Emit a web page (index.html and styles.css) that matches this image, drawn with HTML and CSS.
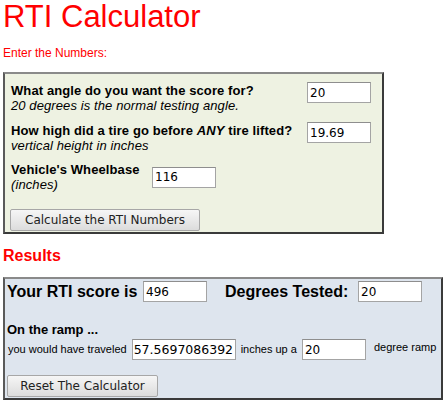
FILE: index.html
```html
<!DOCTYPE html>
<html lang="en">
<head>
    <meta charset="UTF-8">
    <meta name="viewport" content="width=device-width, initial-scale=1.0">
    <title>RTI Calculator</title>
    <link rel="stylesheet" href="styles.css">
</head>
<body>
    <h1>RTI Calculator</h1>
    <p class="intro">Enter the Numbers:</p>

    <!-- Inputs -->
    <form class="panel panel-input" onsubmit="return false;">
        <div class="row">
            <div class="label wide">
                <b>What angle do you want the score for?</b><br>
                <i>20 degrees is the normal testing angle.</i>
            </div>
            <input type="text" id="angle" value="20">
        </div>
        <div class="row">
            <div class="label wide">
                <b>How high did a tire go before <i>ANY</i> tire lifted?</b><br>
                <i>vertical height in inches</i>
            </div>
            <input type="text" id="height" value="19.69">
        </div>
        <div class="row row-center">
            <div class="label short">
                <b>Vehicle's Wheelbase</b><br>
                <i>(inches)</i>
            </div>
            <input type="text" id="wheelbase" value="116">
        </div>
        <button type="button" class="calc-button" onclick="calculate()">Calculate the RTI Numbers</button>
    </form>

    <h2>Results</h2>

    <!-- Results -->
    <div class="panel panel-results">
        <div class="score-row">
            <span class="score-label">Your RTI score is</span>
            <input type="text" id="score" value="496">
            <span class="score-label degrees-label">Degrees Tested:</span>
            <input type="text" id="degrees" value="20">
        </div>
        <div class="ramp-title">On the ramp ...</div>
        <div class="ramp-row">
            <span class="small">you would have traveled</span>
            <input type="text" id="distance" class="long" value="57.5697086392">
            <span class="small">inches up a</span>
            <input type="text" id="ramp" value="20">
            <span class="small top">degree ramp</span>
        </div>
        <button type="button" class="reset-button" onclick="resetForm()">Reset The Calculator</button>
    </div>

    <script>
        function calculate() {
            const angle = parseFloat(document.getElementById('angle').value);
            const height = parseFloat(document.getElementById('height').value);
            const wheelbase = parseFloat(document.getElementById('wheelbase').value);
            if (!angle || !height || !wheelbase) {
                alert('Please fill in all the numbers.');
                return;
            }
            const distance = height / Math.sin(angle * Math.PI / 180);
            document.getElementById('score').value = Math.round(distance / wheelbase * 1000);
            document.getElementById('degrees').value = angle;
            document.getElementById('distance').value = distance.toFixed(10);
            document.getElementById('ramp').value = angle;
        }

        function resetForm() {
            ['angle', 'height', 'wheelbase', 'score', 'degrees', 'distance', 'ramp'].forEach(id => {
                document.getElementById(id).value = '';
            });
        }
    </script>
</body>
</html>
```

FILE: styles.css
```css
body {
    font-family: "Liberation Sans", Arial, sans-serif;
    background-color: #fff;
    color: #000;
    margin: 0;
    padding: 0 3px;
}

h1 {
    color: #ff0000;
    font-size: 31px;
    font-weight: normal;
    line-height: 34px;
    margin: 0;
}

.intro {
    color: #ff0000;
    font-size: 12px;
    line-height: 14px;
    margin: 12px 0 12px;
}

h2 {
    color: #ff0000;
    font-size: 16px;
    line-height: 18px;
    margin: 13px 0 12px;
}

.panel {
    border-style: solid;
    border-width: 2px;
    border-color: #8a8a8a #3a3a3a #3a3a3a #5a5a5a;
}

.panel-input {
    width: 367px;
    background-color: #eef2e2;
    padding: 8px 4px 1px 6px;
    margin: 0;
}

.panel-results {
    width: 432px;
    background-color: #dee5ee;
    padding: 2px 2px 1px 2px;
}

.row {
    display: flex;
    align-items: flex-start;
    margin-bottom: 9px;
}

.row-center {
    align-items: center;
    margin-bottom: 17px;
}

.label {
    font-size: 13px;
    line-height: 15px;
    letter-spacing: 0.1px;
}

.label.wide {
    width: 296px;
    padding-top: 1px;
}

.label.short {
    width: 141px;
}

input {
    flex-shrink: 0;
    width: 64px;
    height: 21px;
    box-sizing: border-box;
    border: 1px solid #a4a4a4;
    border-top-color: #8e8e8e;
    background: #fff;
    padding: 0 2px;
    font-family: "DejaVu Sans", sans-serif;
    font-size: 12px;
    color: #000;
    margin: 0;
}

input.long {
    width: 104px;
    padding: 0 1px;
    font-size: 12.5px;
}

button {
    height: 22px;
    padding: 0 11px;
    font-family: "DejaVu Sans", sans-serif;
    font-size: 12px;
    color: #222;
    background: linear-gradient(#f6f6f6, #dcdcdc);
    border: 1px solid #a7a7a7;
    border-radius: 2px;
    cursor: pointer;
}

button:hover {
    background: linear-gradient(#fafafa, #e6e6e6);
}

.calc-button {
    display: block;
    width: 190px;
    margin-left: -1px;
}

.score-row {
    display: flex;
    align-items: center;
}

.score-label {
    flex-shrink: 0;
    font-size: 16px;
    font-weight: bold;
    width: 136px;
}

.degrees-label {
    width: 133px;
    margin-left: 18px;
}

.ramp-title {
    font-size: 13px;
    font-weight: bold;
    line-height: 15px;
    margin: 20px 0 2px;
}

.ramp-row {
    display: flex;
    align-items: center;
    padding-left: 1px;
}

.small {
    flex-shrink: 0;
    white-space: nowrap;
    font-size: 11px;
    line-height: 13px;
    margin-right: 5px;
}

.ramp-row input {
    margin-right: 5px;
}

.small.top {
    align-self: flex-start;
    margin-left: 3px;
    margin-top: 2px;
    margin-right: 0;
}

.reset-button {
    display: block;
    width: 151px;
    margin-top: 15px;
}
```
